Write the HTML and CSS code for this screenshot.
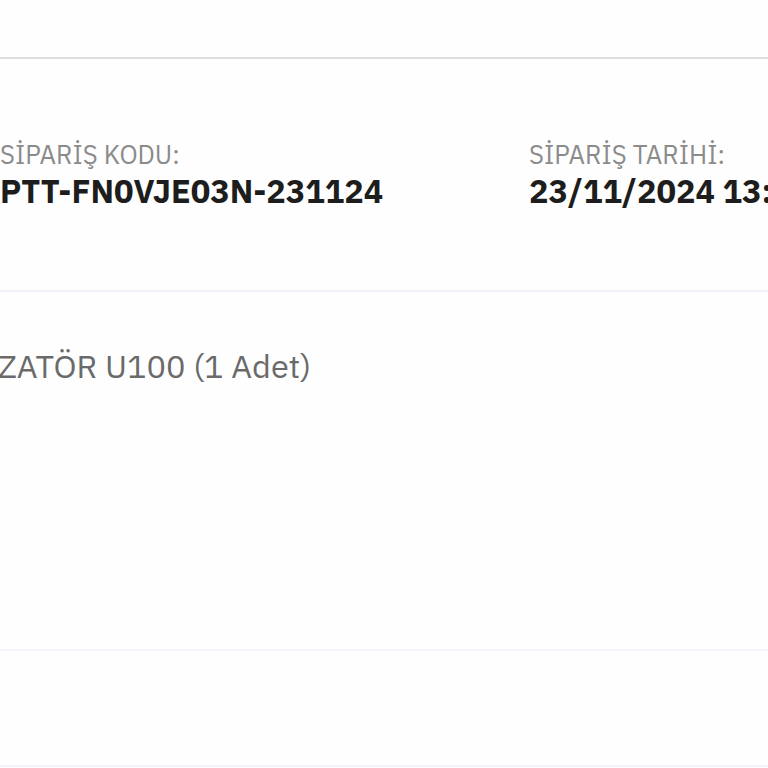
FILE: index.html
```html
<!DOCTYPE html>
<html lang="tr">
<head>
<meta charset="utf-8">
<link rel="stylesheet" href="styles.css">
</head>
<body>
<div class="page">
  <div class="top"></div>
  <section class="info">
    <div class="field">
      <div class="label">SİPARİŞ KODU:</div>
      <div class="value">PTT-FN0VJE03N-231124</div>
    </div>
    <div class="field">
      <div class="label">SİPARİŞ TARİHİ:</div>
      <div class="value">23/11/2024 13:45</div>
    </div>
  </section>
  <section class="product">
    <div class="product-name">ZATÖR U100 (1 Adet)</div>
  </section>
  <section class="footer"></section>
</div>
</body>
</html>
```
FILE: styles.css
```css
html, body {
  margin: 0;
  padding: 0;
  background: #fefefe;
  overflow: hidden;
}
.page {
  width: 768px;
  height: 768px;
  overflow: hidden;
  font-family: "IBM Plex Sans", Inter, "Noto Sans", sans-serif;
}
.top {
  height: 57px;
  border-bottom: 2px solid #dedede;
}
.info {
  height: 233px;
  box-sizing: border-box;
  padding-top: 81px;
  border-bottom: 2px solid #f2f1f9;
  display: grid;
  grid-template-columns: 529px 1fr;
  white-space: nowrap;
}
.label {
  font-size: 25.7px;
  line-height: 30px;
  color: #8b8b8b;
}
.value {
  font-size: 32.5px;
  line-height: 40px;
  margin-top: 1px;
  font-weight: 700;
  color: #1d1d1d;
}
.product {
  height: 359px;
  box-sizing: border-box;
  padding-top: 54px;
  border-bottom: 2px solid #f6f5fb;
}
.product-name {
  font-size: 32.5px;
  line-height: 40px;
  color: #6a6a6a;
  margin-left: -2px;
  white-space: nowrap;
}
.footer {
  height: 116px;
  box-sizing: border-box;
  border-bottom: 2px solid #f3f2fa;
}
```
